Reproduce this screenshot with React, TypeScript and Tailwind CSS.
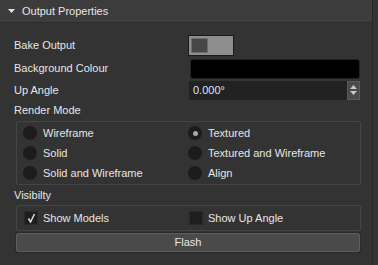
import React, {useState} from "react";

const font = {fontFamily: '"Liberation Sans", Arial, sans-serif'};

const Radio = ({checked, label}: { checked?: boolean; label: string }) => (
    <div className="flex items-center gap-[6px] h-[20px]">
        <span className="shrink-0 size-[14px] rounded-full bg-[#1c1c1c] flex items-center justify-center">
            {checked && <span className="size-[5px] rounded-full bg-[#a8a8a8]"/>}
        </span>
        <span>{label}</span>
    </div>
);

const Check = ({checked, label}: { checked?: boolean; label: string }) => (
    <div className="flex items-center gap-[5px]">
        <span className="shrink-0 size-[14px] bg-[#1e1e1e] border border-[#2a2a2a] flex items-center justify-center">
            {checked && (
                <svg width="9" height="10" viewBox="0 0 9 10">
                    <path d="M1.5 5.5 L3.5 9 L7.5 1" stroke="#d8d8d8" strokeWidth="1.6" fill="none"/>
                </svg>
            )}
        </span>
        <span>{label}</span>
    </div>
);

export default function App() {
    const [textured] = useState(true);

    return (
        <div className="w-[378px] h-[265px] bg-[#333333] flex text-[11px] text-[#e6e6e6]" style={font}>
            <div className="w-[373px] border-r border-[#262626] flex flex-col">
                <div className="h-[23px] bg-[#3c3c3c] border-b border-[#2c2c2c] flex items-center pl-[8px] gap-[7px]">
                    <svg width="7" height="4" viewBox="0 0 7 4">
                        <path d="M0 0 H7 L3.5 4 Z" fill="#e0e0e0"/>
                    </svg>
                    <span>Output Properties</span>
                </div>

                <div className="flex flex-col pl-[14px] pr-[12px] pt-[11px]">
                    <div className="flex items-center h-[22px]">
                        <span className="w-[174px]">Bake Output</span>
                        <div className="w-[46px] h-[21px] border border-[#1a1a1a] bg-[#8e8e8e] p-[2px]">
                            <div className="w-[17px] h-full bg-[#474747] border border-[#6e6e6e]"/>
                        </div>
                    </div>
                    <div className="flex items-center h-[23px] mt-[1px]">
                        <span className="w-[177px]">Background Colour</span>
                        <div className="w-[170px] h-[20px] bg-black border border-[#222] rounded-[3px]"/>
                    </div>
                    <div className="flex items-center h-[20px]">
                        <span className="w-[175px]">Up Angle</span>
                        <div className="w-[171px] h-[19px] bg-[#222222] flex items-center justify-between pl-[4px]">
                            <span className="text-[#dde6ff]">0.000°</span>
                            <div className="w-[13px] h-full bg-[#4a4a4a] border border-[#5a5a5a] flex flex-col items-center justify-center gap-[2px]">
                                <svg width="7" height="4" viewBox="0 0 7 4"><path d="M0 4 H7 L3.5 0 Z" fill="#c8c8c8"/></svg>
                                <svg width="7" height="4" viewBox="0 0 7 4"><path d="M0 0 H7 L3.5 4 Z" fill="#c8c8c8"/></svg>
                            </div>
                        </div>
                    </div>
                    <div className="mt-[1px] h-[19px] flex items-center">Render Mode</div>
                    <div className="ml-[2px] w-[345px] border border-[#454545] rounded-[2px] flex pl-[6px] py-[1px] mt-[1px]">
                        <div className="flex flex-col w-[165px]">
                            <Radio label="Wireframe"/>
                            <Radio label="Solid"/>
                            <Radio label="Solid and Wireframe"/>
                        </div>
                        <div className="flex flex-col">
                            <Radio label="Textured" checked={textured}/>
                            <Radio label="Textured and Wireframe"/>
                            <Radio label="Align"/>
                        </div>
                    </div>
                    <div className="h-[19px] flex items-center mt-[1px]">Visibilty</div>
                    <div className="ml-[2px] w-[345px] h-[26px] border border-[#454545] rounded-[2px] flex items-center px-[7px]">
                        <div className="w-[165px]"><Check label="Show Models" checked/></div>
                        <Check label="Show Up Angle"/>
                    </div>
                    <button
                        className="ml-[2px] mt-[2px] w-[344px] h-[19px] bg-[#4a4a4a] border border-[#5e5e5e] rounded-[2px] shadow-[0_0_0_1px_#2a2a2a] flex items-center justify-center text-[#e6e6e6]">
                        Flash
                    </button>
                </div>
            </div>
        </div>
    );
}
